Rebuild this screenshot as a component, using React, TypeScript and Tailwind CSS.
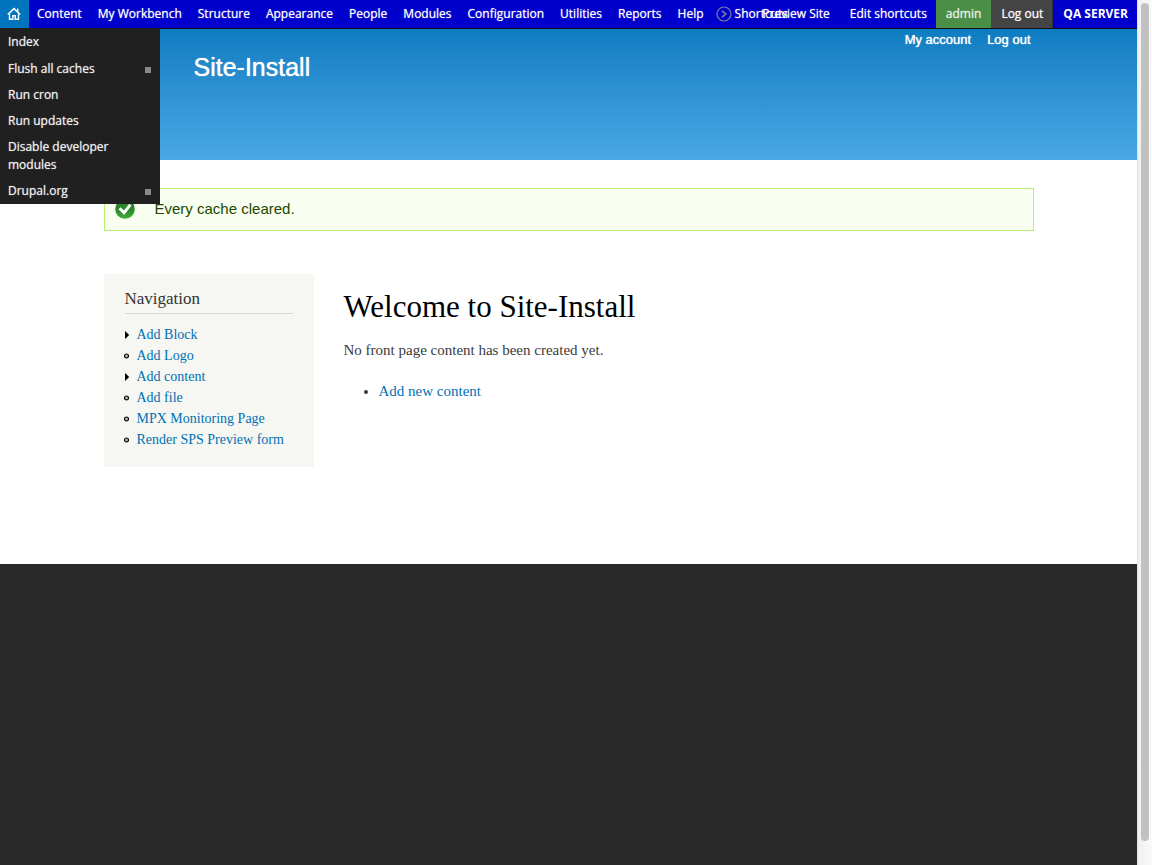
import React from "react";

const menu = [
  "Content",
  "My Workbench",
  "Structure",
  "Appearance",
  "People",
  "Modules",
  "Configuration",
  "Utilities",
  "Reports",
  "Help",
];

const homeMenu = [
  { label: "Index", expandable: false },
  { label: "Flush all caches", expandable: true },
  { label: "Run cron", expandable: false },
  { label: "Run updates", expandable: false },
  { label: "Disable developer modules", expandable: false },
  { label: "Drupal.org", expandable: true },
];

const navigation = [
  { label: "Add Block", collapsed: true },
  { label: "Add Logo", collapsed: false },
  { label: "Add content", collapsed: true },
  { label: "Add file", collapsed: false },
  { label: "MPX Monitoring Page", collapsed: false },
  { label: "Render SPS Preview form", collapsed: false },
];

function HomeIcon() {
  return (
    <svg width="14" height="14" viewBox="0 0 14 14" fill="none" stroke="#fff" aria-hidden="true">
      <path d="M0.8 7.5 7 1.6l6.2 5.9" strokeWidth="1.6" />
      <path d="M10.7 1.6v3" strokeWidth="1.5" />
      <path d="M2.5 7v5.3h3.3V8.8h2.4v3.5h3.3V7" strokeWidth="1.4" />
    </svg>
  );
}

function ShortcutsIcon() {
  return (
    <svg width="16" height="16" viewBox="0 0 16 16" fill="none" stroke="#8080a0" aria-hidden="true">
      <circle cx="8" cy="8" r="7" strokeWidth="1.2" />
      <path d="M6 4.8 9.8 8 6 11.2" strokeWidth="1.6" />
    </svg>
  );
}

function OkIcon() {
  return (
    <svg width="20" height="20" viewBox="0 0 20 20" aria-hidden="true">
      <defs>
        <linearGradient id="ok" x1="0" y1="0" x2="0" y2="1">
          <stop offset="0" stopColor="#2a7a2a" />
          <stop offset="0.55" stopColor="#2b8a2b" />
          <stop offset="1" stopColor="#3fae33" />
        </linearGradient>
      </defs>
      <circle cx="10" cy="10" r="9.8" fill="url(#ok)" />
      <path d="M4.6 9.2 9 13.8l6.4-8.2" fill="none" stroke="#fff" strokeWidth="3" />
    </svg>
  );
}

function ItemMarker({ collapsed }: { collapsed: boolean }) {
  return (
    <svg width="6" height="8" viewBox="0 0 6 8" aria-hidden="true">
      {collapsed ? (
        <path d="M1 0 5.2 4 1 8z" fill="#000" />
      ) : (
        <circle cx="2.5" cy="4" r="2" fill="#bbb" stroke="#000" strokeWidth="1.2" />
      )}
    </svg>
  );
}

function Toolbar() {
  return (
    <header className="relative z-10 flex h-[29px] border-b border-[#101010] bg-[#0000cc] font-['Open_Sans',sans-serif] text-[12px] leading-[28px] font-medium whitespace-nowrap text-white [text-shadow:0_0_1px_#ffffffb0]">
      <nav aria-label="Administration" className="flex min-w-0 flex-1">
        <div className="relative">
          <a href="#home" aria-label="Home" className="flex h-7 w-[29px] items-center bg-[#0074bd] pl-[7px]">
            <HomeIcon />
          </a>
          <ul className="absolute top-full left-0 w-40 bg-[#202020] pt-px leading-[18px] whitespace-normal text-[#eee]">
            {homeMenu.map((item) => (
              <li key={item.label} className="first:pb-px">
                <a href="#item" className="flex items-center justify-between px-2 py-1">
                  <span className="max-w-28">{item.label}</span>
                  {item.expandable && <span className="mt-0.5 mr-px size-1.5 bg-[#888]" />}
                </a>
              </li>
            ))}
          </ul>
        </div>
        {menu.map((label) => (
          <a key={label} href="#menu" className="px-2">
            {label}
          </a>
        ))}
        <a href="#shortcuts" className="flex items-center gap-[3px] px-1">
          <ShortcutsIcon />
          Shortcuts
        </a>
      </nav>
      <nav aria-label="User" className="flex shrink-0">
        <a href="#preview" className="px-2.5">Preview Site</a>
        <a href="#edit" className="pr-[9px] pl-2.5">Edit shortcuts</a>
        <a href="#admin" className="bg-[#4b8f46] px-2.5 text-[#e8f0e6]">admin</a>
        <a href="#logout" className="border-r border-[#333] bg-[#444] pr-[9px] pl-2.5">Log out</a>
        <span className="pr-[9px] pl-2.5 font-bold [text-shadow:none]">QA SERVER</span>
      </nav>
    </header>
  );
}

export default function App() {
  return (
    <div className="flex min-h-screen bg-[#292929]">
      <div className="min-w-0 flex-1">
        <Toolbar />
        <div className="h-[131px] bg-linear-to-b from-[#0c7cc1] to-[#48a9e4] font-['Liberation_Sans',sans-serif] text-white">
          <div className="mx-auto max-w-[930px]">
            <div className="flex justify-end gap-4 pr-[3px] text-[13px] leading-[22px] [text-shadow:0_0_1px_#fff]">
              <a href="#account">My account</a>
              <a href="#logout">Log out</a>
            </div>
            <a href="#site" className="ml-[90px] inline-block text-[25px] leading-8 [text-shadow:0_0_1px_#fff]">
              Site-Install
            </a>
          </div>
        </div>
        <div className="bg-white pt-7 pb-[97px]">
          <div className="mx-auto max-w-[930px]">
            <div
              role="status"
              className="flex items-center gap-5 border border-[#bbee77] bg-[#f8fff0] px-2.5 pt-[9px] pb-[11px] font-['Liberation_Sans',sans-serif] text-[15px] leading-[21px] text-[#234600]"
            >
              <OkIcon />
              Every cache cleared.
            </div>
            <div className="mt-[43px] flex items-start gap-[30px] font-['Liberation_Serif',serif]">
              <aside className="w-[210px] shrink-0 bg-[#f6f6f2] px-[21px] pt-[13px] pb-[17px]">
                <h2 className="border-b border-[#d6d6d6] pb-[3px] text-[17px] leading-[23px] text-[#333]">
                  Navigation
                </h2>
                <ul className="-ml-px pt-[10px] text-[14px] leading-[21px]">
                  {navigation.map((item) => (
                    <li key={item.label} className="flex items-center gap-[7px]">
                      <ItemMarker collapsed={item.collapsed} />
                      <a href="#nav" className="text-[#0071b3]">{item.label}</a>
                    </li>
                  ))}
                </ul>
              </aside>
              <main className="text-[15px] leading-[22px] text-[#3b3b3b]">
                <h1 className="pt-[13px] text-[31px] leading-[40px] text-black">Welcome to Site-Install</h1>
                <p className="mt-3">No front page content has been created yet.</p>
                <ul className="mt-[19px] list-disc pl-[35px]">
                  <li>
                    <a href="#new" className="text-[#0071b3]">Add new content</a>
                  </li>
                </ul>
              </main>
            </div>
          </div>
        </div>
      </div>
      <div aria-hidden="true" className="flex w-[15px] shrink-0 border-l border-[#e2e2e2] bg-linear-to-r from-[#f0f0f0] to-[#fafafa] pt-[3px] pr-[3px] pb-6 pl-[3px]">
        <div className="flex-1 rounded-full bg-[#c1c1c1]" />
      </div>
    </div>
  );
}
